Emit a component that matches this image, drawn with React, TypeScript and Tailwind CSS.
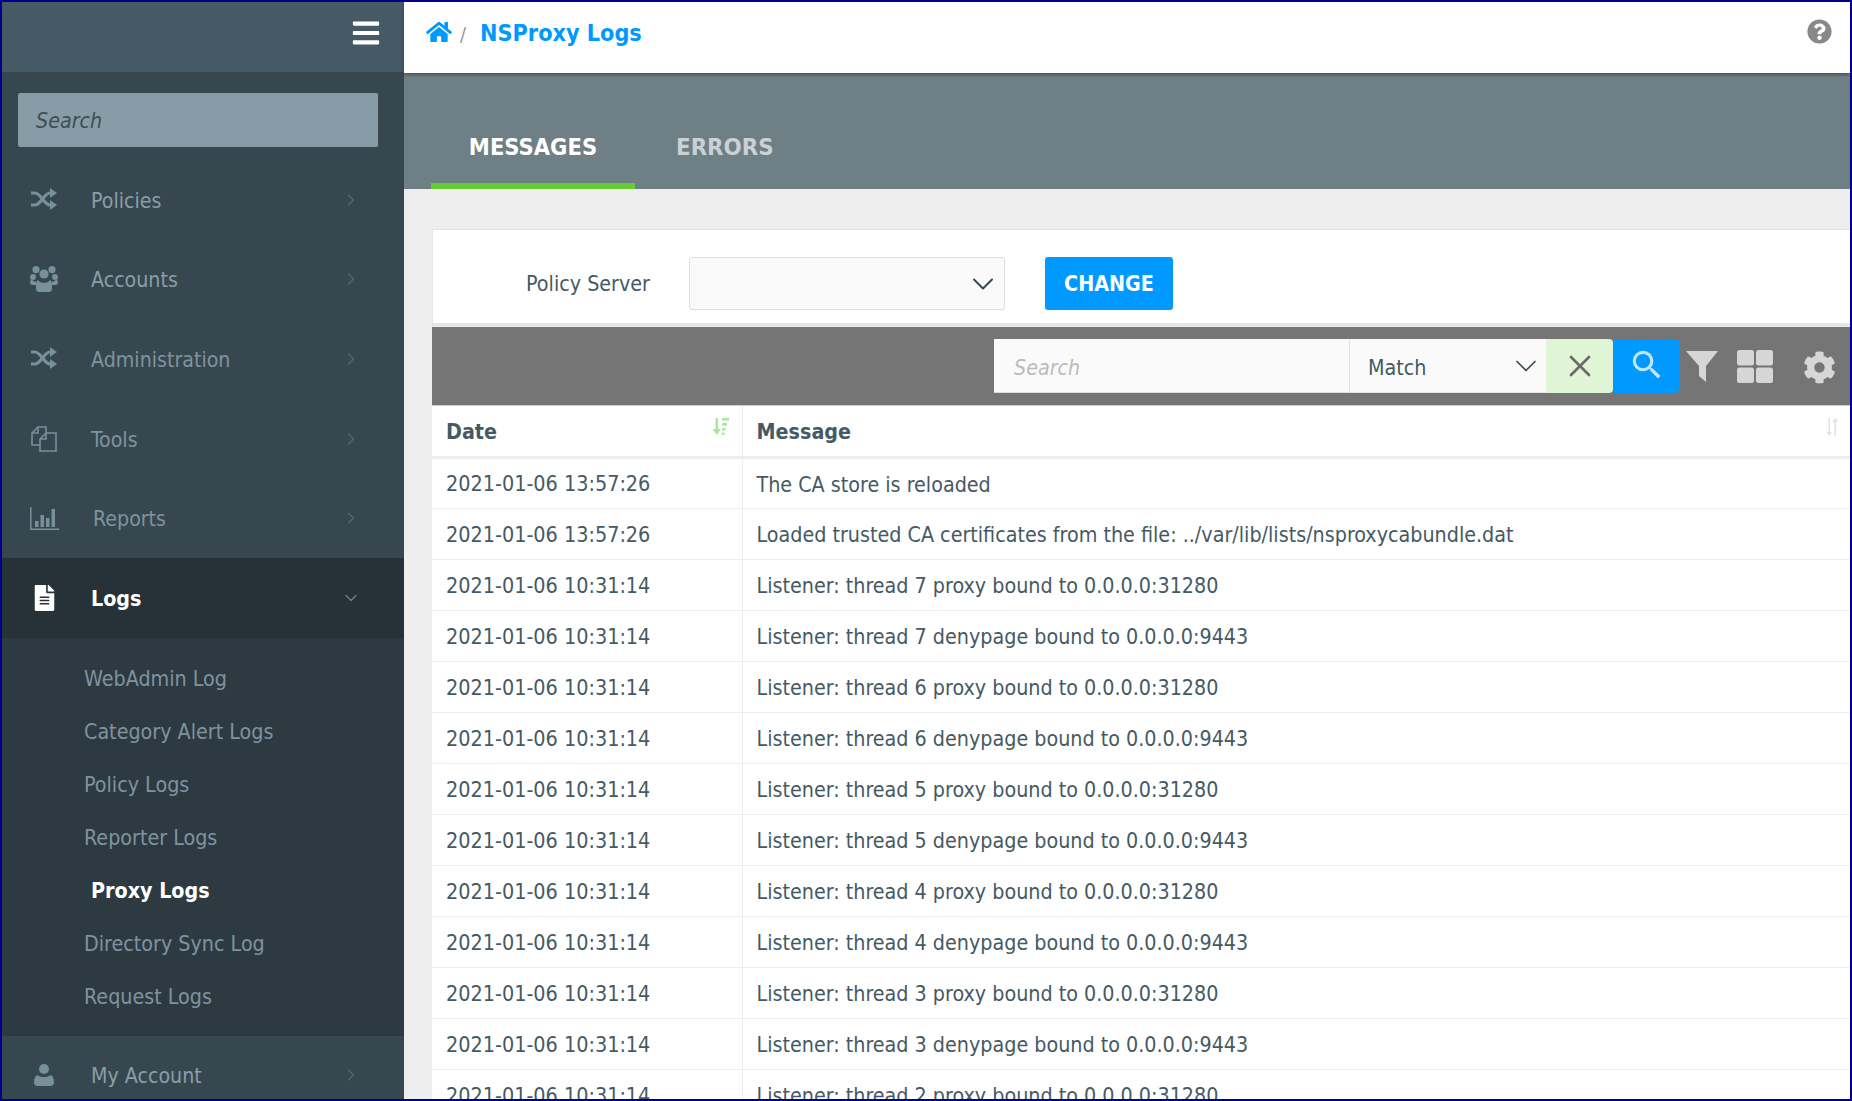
import { ChevronDown, ChevronRight, X } from "lucide-react";
import { MdSearch } from "react-icons/md";
import { FaBars, FaCog, FaFileAlt, FaHome, FaQuestionCircle } from "react-icons/fa";

const font = "font-['DejaVu_Sans_Condensed','Noto_Sans',sans-serif]";

function ShuffleIcon() {
  return (
    <svg viewBox="0 0 26 22" className="w-[26px] h-[22px] -mt-[2px]" fill="none" stroke="currentColor" strokeWidth="3.2">
      <path d="M0 5h4c6 0 9 12 15 12h2" />
      <path d="M0 17h4c6 0 9-12 15-12h2" />
      <path d="M19 0l7 5-7 5z" fill="currentColor" stroke="none" />
      <path d="M19 12l7 5-7 5z" fill="currentColor" stroke="none" />
    </svg>
  );
}

function UsersIcon() {
  return (
    <svg viewBox="0 0 28 26" className="w-[28px] h-[26px]" fill="currentColor">
      <circle cx="6" cy="3.6" r="3.6" />
      <circle cx="22" cy="3.6" r="3.6" />
      <circle cx="14" cy="8" r="4.6" />
      <circle cx="3" cy="11" r="3" />
      <circle cx="25" cy="11" r="3" />
      <path d="M1 13c2 2 4 3 5.500 3l-.5 3H3c-2 0-3-1-3-2.500z" />
      <path d="M27 13c-2 2-4 3-5.500 3l.5 3h3c2 0 3-1 3-2.500z" />
      <path d="M7.500 14c2 2 4 2.800 6.500 2.800s4.500-.8 6.500-2.800c.9 1 1.500 3 1.500 6.500v2.500c0 2-1.500 3-3 3H9c-1.500 0-3-1-3-3v-2.500c0-3.500.6-5.500 1.500-6.500z" />
    </svg>
  );
}

function UserIcon() {
  return (
    <svg viewBox="0 0 20 22" className="w-[20px] h-[22px]" fill="currentColor">
      <circle cx="10" cy="5" r="5" />
      <path d="M3.500 11c1.700 1.500 4 2.200 6.500 2.200s4.800-.7 6.500-2.200c2.300 1 3.500 3.500 3.500 7 0 2.500-1.500 4-3.500 4h-13C1.500 22 0 20.500 0 18c0-3.500 1.200-6 3.500-7z" />
    </svg>
  );
}

function ToolsIcon() {
  return (
    <svg viewBox="0 0 26 26" className="w-[26px] h-[26px]" fill="none" stroke="currentColor" strokeWidth="1.6">
      <path d="M9 19H1V7l6-6h8v6" />
      <path d="M1 7h6V1" />
      <path d="M9 13l6-6h10v18H9z" />
      <path d="M9 13h6V7" />
    </svg>
  );
}

function ChartIcon() {
  return (
    <svg viewBox="0 0 29 23" className="w-[29px] h-[23px]" fill="currentColor">
      <path d="M0 0h1.500v21.500H29V23H0z" />
      <rect x="5" y="14" width="3.500" height="6" />
      <rect x="10.500" y="8" width="3.500" height="12" />
      <rect x="16" y="11" width="3.500" height="9" />
      <rect x="21.500" y="2" width="3.500" height="18" />
    </svg>
  );
}

function FilterIcon() {
  return (
    <svg viewBox="0 0 32 31" className="w-[32px] h-[31px]" fill="#d6d6d6">
      <path d="M0 0h32L20 15v16l-7-6V15z" />
    </svg>
  );
}

function SortAmountIcon() {
  return (
    <svg viewBox="0 0 17 17" className="w-[17px] h-[17px]" fill="#aee59a">
      <path d="M3.500 0h2.500v11h3l-4.200 6L0.500 11h3z" />
      <rect x="10" y="0" width="7" height="2.600" />
      <rect x="10" y="5" width="5" height="2.600" />
      <rect x="10" y="10" width="3.500" height="2.600" />
      <rect x="10" y="14.400" width="2.500" height="2.600" />
    </svg>
  );
}

function SortIcon() {
  return (
    <svg viewBox="0 0 14 18" className="w-[14px] h-[18px]" fill="#dfe3e5">
      <path d="M2.400 0h1.600v14h2l-2.800 4L.4 14h2z" />
      <path d="M10 18H8.400V4h-2l2.800-4L12 4h-2z" />
    </svg>
  );
}

function GridIcon() {
  return (
    <svg viewBox="0 0 36 33" className="w-[36px] h-[33px]" fill="#d6d6d6">
      <rect x="0" y="0" width="17" height="15.500" rx="2.500" />
      <rect x="19" y="0" width="17" height="15.500" rx="2.500" />
      <rect x="0" y="17.500" width="17" height="15.500" rx="2.500" />
      <rect x="19" y="17.500" width="17" height="15.500" rx="2.500" />
    </svg>
  );
}

function NavItem({ icon, label, labelClass = "text-[#8a9ea8]" }: { icon: React.ReactNode; label: string; labelClass?: string }) {
  return (
    <div className="h-[79.6px] shrink-0 flex items-center text-[21.2px]">
      <div className="w-[84px] flex justify-center text-[#78909c]">{icon}</div>
      <span className={`flex-1 pl-[5px] pt-[2px] ${labelClass}`}>{label}</span>
      <ChevronRight className="w-[20px] h-[20px] mr-[43px] text-[#55676f]" strokeWidth={1.4} />
    </div>
  );
}

const subItems = ["WebAdmin Log", "Category Alert Logs", "Policy Logs", "Reporter Logs", "Proxy Logs", "Directory Sync Log", "Request Logs"];

const rows: [string, string][] = [
  ["2021-01-06 13:57:26", "The CA store is reloaded"],
  ["2021-01-06 13:57:26", "Loaded trusted CA certificates from the file: ../var/lib/lists/nsproxycabundle.dat"],
  ["2021-01-06 10:31:14", "Listener: thread 7 proxy bound to 0.0.0.0:31280"],
  ["2021-01-06 10:31:14", "Listener: thread 7 denypage bound to 0.0.0.0:9443"],
  ["2021-01-06 10:31:14", "Listener: thread 6 proxy bound to 0.0.0.0:31280"],
  ["2021-01-06 10:31:14", "Listener: thread 6 denypage bound to 0.0.0.0:9443"],
  ["2021-01-06 10:31:14", "Listener: thread 5 proxy bound to 0.0.0.0:31280"],
  ["2021-01-06 10:31:14", "Listener: thread 5 denypage bound to 0.0.0.0:9443"],
  ["2021-01-06 10:31:14", "Listener: thread 4 proxy bound to 0.0.0.0:31280"],
  ["2021-01-06 10:31:14", "Listener: thread 4 denypage bound to 0.0.0.0:9443"],
  ["2021-01-06 10:31:14", "Listener: thread 3 proxy bound to 0.0.0.0:31280"],
  ["2021-01-06 10:31:14", "Listener: thread 3 denypage bound to 0.0.0.0:9443"],
  ["2021-01-06 10:31:14", "Listener: thread 2 proxy bound to 0.0.0.0:31280"],
];

export default function App() {
  return (
    <div className={`${font} h-screen flex overflow-hidden border-2 border-[#00008b] bg-[#eeeeee] text-[21.3px] text-[#455a64]`}>
      <aside className="w-[402px] shrink-0 bg-[#37474f] flex flex-col overflow-hidden">
        <div className="h-[70px] shrink-0 bg-[#465a65] flex items-center justify-end pr-[24px] pb-[8px] text-white">
          <FaBars className="w-[28px] h-[30px]" />
        </div>
        <div className="pt-[21px] px-[16px] pb-[13px] shrink-0">
          <div className="h-[54px] w-[360px] bg-[#879ca6] rounded-[2px] flex items-center pl-[18px] pt-[1px] italic text-[#3d4f58]">Search</div>
        </div>
        <NavItem icon={<ShuffleIcon />} label="Policies" />
        <NavItem icon={<UsersIcon />} label="Accounts" />
        <NavItem icon={<ShuffleIcon />} label="Administration" labelClass="text-[#7f939d]" />
        <NavItem icon={<ToolsIcon />} label="Tools" labelClass="text-[#7f939d]" />
        <NavItem icon={<ChartIcon />} label="Reports" labelClass="pl-[7px] text-[#7f939d]" />
        <div className="h-[79.6px] shrink-0 bg-[#263238] flex items-center text-white font-bold">
          <div className="w-[84px] flex justify-center"><FaFileAlt className="w-[23px] h-[26px]" /></div>
          <span className="flex-1 pl-[5px] pt-[2px]">Logs</span>
          <ChevronDown className="w-[20px] h-[20px] mr-[43px] text-[#6d7f88]" strokeWidth={1.6} />
        </div>
        <div className="bg-[#2d3a42] pt-[14px] pb-[13px] shrink-0">
          {subItems.map((item) =>
            item === "Proxy Logs" ? (
              <div key={item} className="h-[53px] flex items-center pl-[89px] pt-[1px] text-white font-bold">{item}</div>
            ) : (
              <div key={item} className="h-[53px] flex items-center pl-[82px] pt-[1px] text-[#7f939d]">{item}</div>
            ),
          )}
        </div>
        <NavItem icon={<UserIcon />} label="My Account" />
      </aside>

      <main className="flex-1 min-w-0 flex flex-col">
        <header className="h-[71px] shrink-0 bg-white flex items-center pl-[22px] pr-[18px] pb-[8px] shadow-[0_2px_3px_rgba(0,0,0,0.35)] z-10">
          <FaHome className="w-[26px] h-[24px] text-[#0099ff] -mt-[3px]" />
          <span className="ml-[8px] mr-[14px] text-[#999999] text-[20px]">/</span>
          <span className="text-[#0099ff] font-bold text-[23.2px]">NSProxy Logs</span>
          <FaQuestionCircle className="ml-auto w-[25px] h-[25px] text-[#888888] -mt-[4px]" />
        </header>

        <nav className="h-[116px] shrink-0 bg-[#6f7f86] flex items-end pl-[27px]">
          <div className="w-[204px] h-[64px] flex justify-center pt-[6px] leading-[32px] border-b-[6px] border-[#66cc33] text-white font-bold text-[23.5px]">MESSAGES</div>
          <div className="h-[64px] pt-[6px] ml-[41px] leading-[32px] text-[#c9d1d4] font-bold text-[23.8px]">ERRORS</div>
        </nav>

        <div className="flex-1 min-h-0 pt-[40px] pl-[28px] overflow-hidden">
          <section className="h-[97px] bg-white border-t border-l border-[#e6e6e6] border-b-[3px] flex items-start pt-[27px]">
            <label className="w-[256px] h-[53px] pr-[39px] flex items-center justify-end">Policy Server</label>
            <div className="w-[316px] h-[53px] bg-[#fafafa] border border-[#dddddd] rounded-[3px] flex items-center justify-end pr-[3px]">
              <ChevronDown className="w-[36px] h-[36px] text-[#37474f]" strokeWidth={1.3} />
            </div>
            <button className="ml-[40px] w-[128px] h-[53px] bg-[#0099ff] rounded-[3px] text-white font-bold">CHANGE</button>
          </section>

          <div className="mt-[1px] h-[79px] bg-[#757575] flex items-center pr-[14px] border-b-[1px] border-[#c9d0d3]">
            <div className="ml-auto flex items-center">
              <div className="w-[355px] h-[54px] bg-[#fafafa] flex items-center pl-[20px] pt-[4px] italic text-[#bbbbbb] border-b border-[#dddddd]">Search</div>
              <div className="w-[197px] h-[54px] bg-[#fafafa] border-l border-b border-[#e4e4e4] flex items-center justify-between pl-[18px] pr-[2px]">
                <span className="pt-[4px]">Match</span>
                <ChevronDown className="w-[36px] h-[36px] text-[#37474f]" strokeWidth={1.1} />
              </div>
              <div className="w-[67px] h-[54px] bg-[#e0f4d6] rounded-r-[4px] flex items-center justify-center text-[#6b6b6b]">
                <X className="w-[36px] h-[36px]" strokeWidth={1.8} />
              </div>
              <div className="w-[67px] h-[54px] bg-[#0099ff] rounded-r-[6px] flex items-center justify-center text-[#bfe6ff]">
                <MdSearch className="w-[38px] h-[38px] -mt-[2px]" />
              </div>
              <div className="ml-[6px]"><FilterIcon /></div>
              <div className="ml-[19px]"><GridIcon /></div>
              <FaCog className="ml-[30px] w-[33px] h-[33px] text-[#d6d6d6] mt-[2px]" />
            </div>
          </div>

          <table className="w-full bg-white table-fixed border-collapse">
            <thead>
              <tr className="h-[51px] border-b-[3px] border-[#eeeeee]">
                <th className="w-[310px] pl-[14px] pt-[3px] text-left font-bold border-r border-[#eeeeee] relative">
                  Date
                  <span className="absolute right-[13px] top-[12px]"><SortAmountIcon /></span>
                </th>
                <th className="pl-[14px] pt-[3px] text-left font-bold relative">
                  Message
                  <span className="absolute right-[10px] top-[12px]"><SortIcon /></span>
                </th>
              </tr>
            </thead>
            <tbody>
              {rows.map(([date, message], i) => (
                <tr key={i} className="h-[51px] border-b border-[#eeeeee]">
                  <td className="pl-[14px] pt-[3px] border-r border-[#eeeeee] text-[21.4px]">{date}</td>
                  <td className="pl-[14px] pt-[3px]">{message}</td>
                </tr>
              ))}
            </tbody>
          </table>
        </div>
      </main>
    </div>
  );
}
